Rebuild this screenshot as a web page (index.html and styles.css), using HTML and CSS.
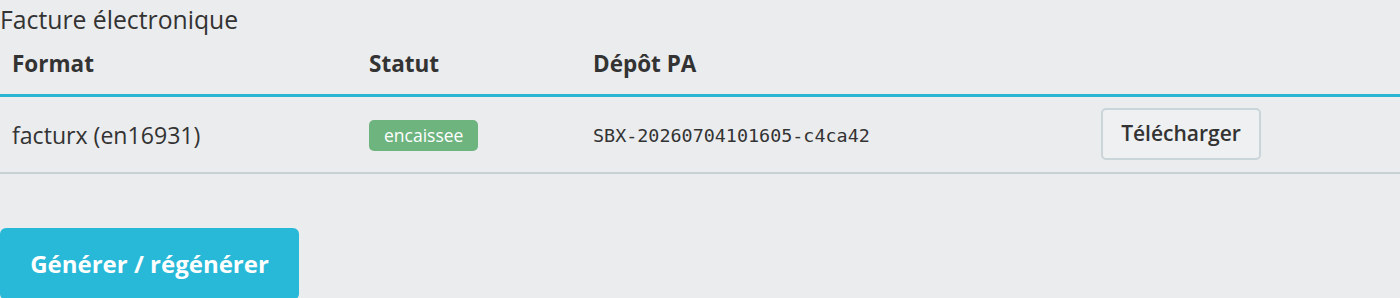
FILE: index.html
```html
<!DOCTYPE html>
<html lang="fr">
<head>
<meta charset="utf-8">
<link rel="stylesheet" href="styles.css">
</head>
<body>
<div class="page">
  <h2 class="title">Facture électronique</h2>
  <table class="tbl">
    <thead>
      <tr>
        <th class="c1">Format</th>
        <th class="c2">Statut</th>
        <th class="c3">Dépôt PA</th>
        <th class="c4"></th>
      </tr>
    </thead>
    <tbody>
      <tr>
        <td class="fmt">facturx (en16931)</td>
        <td><span class="badge">encaissee</span></td>
        <td><code class="mono">SBX-20260704101605-c4ca42</code></td>
        <td><button class="btn-dl">Télécharger</button></td>
      </tr>
    </tbody>
  </table>
  <button class="btn-gen">Générer / régénérer</button>
</div>
</body>
</html>
```
FILE: styles.css
```css
html, body {
  margin: 0;
  padding: 0;
  background: #ebecee;
}
body {
  font-family: "Open Sans", "Liberation Sans", sans-serif;
  color: #333;
}
.page {
  display: flex;
  flex-direction: column;
  align-items: flex-start;
}
.title {
  margin: 0;
  font-weight: 400;
  font-size: 24.75px;
  line-height: 30px;
  padding-top: 5px;
  color: #333;
}
.tbl {
  width: 100%;
  border-collapse: collapse;
  margin-top: 14px;
}
.tbl th {
  text-align: left;
  font-size: 22.5px;
  font-weight: 700;
  padding: 0 12px 15px 12px;
  line-height: 30px;
  border-bottom: 3px solid #2ab4d3;
}
.tbl th.c1 { width: 333px; }
.tbl th.c2 { width: 200px; }
.tbl th.c3 { width: 484px; }
.tbl td {
  font-size: 22.5px;
  line-height: 30px;
  padding: 0 12px;
  height: 75px;
  vertical-align: middle;
  border-bottom: 2px solid #c7d1d2;
}
.tbl td.fmt {
  font-size: 23.1px;
}
.badge {
  display: inline-block;
  background: #6db47f;
  color: #fff;
  font-size: 17.5px;
  line-height: 23px;
  padding: 4px 15px 4px 15px;
  border-radius: 5px;
}
.mono {
  font-family: "DejaVu Sans Mono", "Liberation Mono", monospace;
  font-size: 18.4px;
  color: #333;
}
.btn-dl {
  font-family: "Open Sans", "Liberation Sans", sans-serif;
  font-size: 21px;
  font-weight: 600;
  color: #333;
  background: #eef0f1;
  border: 2px solid #c9d5d8;
  border-radius: 5px;
  width: 160px;
  height: 52px;
  padding: 0 0 2px;
  margin-bottom: 2px;
  cursor: pointer;
}
.btn-gen {
  margin-top: 54px;
  font-family: "Open Sans", "Liberation Sans", sans-serif;
  font-size: 24px;
  font-weight: 700;
  color: #fff;
  background: #28b8d8;
  border: none;
  border-radius: 6px;
  width: 299px;
  height: 72px;
  padding: 0 0 2px;
}
```
